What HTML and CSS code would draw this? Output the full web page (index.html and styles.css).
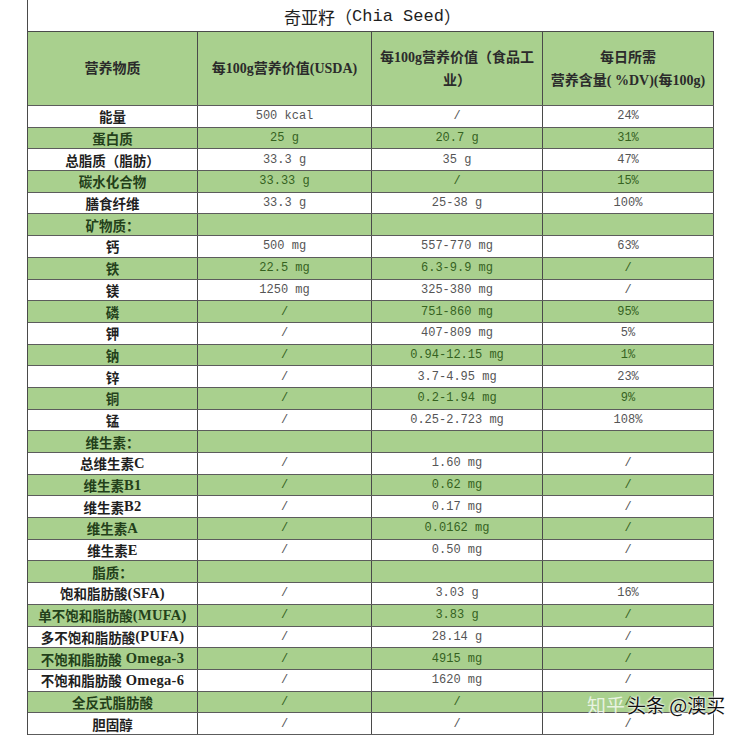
FILE: index.html
```html
<!DOCTYPE html>
<html lang="zh-CN">
<head>
<meta charset="utf-8">
<title>奇亚籽（Chia Seed）</title>
<link rel="stylesheet" href="styles.css">
</head>
<body>
<div class="sheet">
  <div class="title">奇亚籽（<span class="lat">Chia Seed</span>）</div>
  <div class="row head">
    <div>营养物质</div>
    <div>每100g营养价值(USDA)</div>
    <div>每100g营养价值（食品工<br>业）</div>
    <div>每日所需<br>营养含量( %DV)(每100g)</div>
  </div>
  <div class="row"><div class="lbl">能量</div><div>500 kcal</div><div>/</div><div>24%</div></div>
  <div class="row g"><div class="lbl">蛋白质</div><div>25 g</div><div>20.7 g</div><div>31%</div></div>
  <div class="row"><div class="lbl">总脂质（脂肪）</div><div>33.3 g</div><div>35 g</div><div>47%</div></div>
  <div class="row g"><div class="lbl">碳水化合物</div><div>33.33 g</div><div>/</div><div>15%</div></div>
  <div class="row"><div class="lbl">膳食纤维</div><div>33.3 g</div><div>25-38 g</div><div>100%</div></div>
  <div class="row g"><div class="lbl">矿物质：</div><div></div><div></div><div></div></div>
  <div class="row"><div class="lbl">钙</div><div>500 mg</div><div>557-770 mg</div><div>63%</div></div>
  <div class="row g"><div class="lbl">铁</div><div>22.5 mg</div><div>6.3-9.9 mg</div><div>/</div></div>
  <div class="row"><div class="lbl">镁</div><div>1250 mg</div><div>325-380 mg</div><div>/</div></div>
  <div class="row g"><div class="lbl">磷</div><div>/</div><div>751-860 mg</div><div>95%</div></div>
  <div class="row"><div class="lbl">钾</div><div>/</div><div>407-809 mg</div><div>5%</div></div>
  <div class="row g"><div class="lbl">钠</div><div>/</div><div>0.94-12.15 mg</div><div>1%</div></div>
  <div class="row"><div class="lbl">锌</div><div>/</div><div>3.7-4.95 mg</div><div>23%</div></div>
  <div class="row g"><div class="lbl">铜</div><div>/</div><div>0.2-1.94 mg</div><div>9%</div></div>
  <div class="row"><div class="lbl">锰</div><div>/</div><div>0.25-2.723 mg</div><div>108%</div></div>
  <div class="row g"><div class="lbl">维生素：</div><div></div><div></div><div></div></div>
  <div class="row"><div class="lbl">总维生素<span class="lat">C</span></div><div>/</div><div>1.60 mg</div><div>/</div></div>
  <div class="row g"><div class="lbl">维生素<span class="lat">B1</span></div><div>/</div><div>0.62 mg</div><div>/</div></div>
  <div class="row"><div class="lbl">维生素<span class="lat">B2</span></div><div>/</div><div>0.17 mg</div><div>/</div></div>
  <div class="row g"><div class="lbl">维生素<span class="lat">A</span></div><div>/</div><div>0.0162 mg</div><div>/</div></div>
  <div class="row"><div class="lbl">维生素<span class="lat">E</span></div><div>/</div><div>0.50 mg</div><div>/</div></div>
  <div class="row g"><div class="lbl">脂质：</div><div></div><div></div><div></div></div>
  <div class="row"><div class="lbl">饱和脂肪酸<span class="lat">(SFA)</span></div><div>/</div><div>3.03 g</div><div>16%</div></div>
  <div class="row g"><div class="lbl">单不饱和脂肪酸<span class="lat">(MUFA)</span></div><div>/</div><div>3.83 g</div><div>/</div></div>
  <div class="row"><div class="lbl">多不饱和脂肪酸<span class="lat">(PUFA)</span></div><div>/</div><div>28.14 g</div><div>/</div></div>
  <div class="row g"><div class="lbl">不饱和脂肪酸<span class="lat om">Omega-3</span></div><div>/</div><div>4915 mg</div><div>/</div></div>
  <div class="row"><div class="lbl">不饱和脂肪酸<span class="lat om">Omega-6</span></div><div>/</div><div>1620 mg</div><div>/</div></div>
  <div class="row g"><div class="lbl">全反式脂肪酸</div><div>/</div><div>/</div><div>/</div></div>
  <div class="row"><div class="lbl">胆固醇</div><div>/</div><div>/</div><div>/</div></div>
</div>
<div class="mark"><span class="zh">知乎</span><span class="tt">头条 @澳买</span></div>
</body>
</html>
```

FILE: styles.css
```css
html, body {
  margin: 0;
  padding: 0;
  background: #ffffff;
}
body {
  position: relative;
  width: 745px;
  height: 735px;
  overflow: hidden;
  font-family: "Liberation Mono", "Noto Sans CJK SC", monospace;
}
.sheet {
  margin-left: 27px;
  width: 686px;
  border-left: 1px solid #4a4a4a;
}
.title {
  height: 32px;
  box-sizing: border-box;
  border-bottom: 1px solid #4a4a4a;
  display: flex;
  align-items: center;
  justify-content: center;
  font-family: "Noto Sans CJK SC", sans-serif;
  font-size: 17px;
  color: #1e1e1e;
  padding-left: 3px;
  padding-top: 1px;
}
.title .lat {
  font-family: "Liberation Mono", monospace;
  font-size: 17px;
}
.row {
  display: grid;
  grid-template-columns: 170px 174px 171px 171px;
  height: 21.7px;
  box-sizing: border-box;
  border-bottom: 1px solid #5c5c5c;
  background: #ffffff;
  color: #555555;
  font-size: 12px;
}
.row.g {
  background: #a9d08e;
  color: #35621f;
}
.row > div {
  border-right: 1px solid #4a4a4a;
  display: flex;
  align-items: center;
  justify-content: center;
  white-space: nowrap;
  overflow: hidden;
}
.row > .lbl {
  font-family: "Liberation Serif", "Noto Sans CJK SC", serif;
  font-weight: bold;
  font-size: 13.5px;
  color: #1f1f1f;
}
.lbl .lat {
  font-size: 14.5px;
  letter-spacing: 0.3px;
}
.lbl .om {
  margin-left: 4px;
}
.row.g > .lbl {
  color: #23401a;
}
.row.head {
  height: 74px;
  background: #a9d08e;
  color: #2b2b2b;
  font-family: "Liberation Serif", "Noto Sans CJK SC", serif;
  font-weight: bold;
  font-size: 14px;
  line-height: 23px;
}
.row.head > div {
  text-align: center;
  padding: 0;
}
.mark {
  position: absolute;
  left: 587px;
  top: 692px;
  font-family: "Noto Sans CJK SC", sans-serif;
  font-size: 19px;
  line-height: 26px;
  white-space: nowrap;
}
.mark .zh {
  color: rgba(255, 255, 255, 0.75);
  margin-right: 2px;
}
.mark .tt {
  color: #111111;
  text-shadow: 0 0 2px #ffffff, 0 0 2px #ffffff, 0 0 3px #ffffff;
}
```
